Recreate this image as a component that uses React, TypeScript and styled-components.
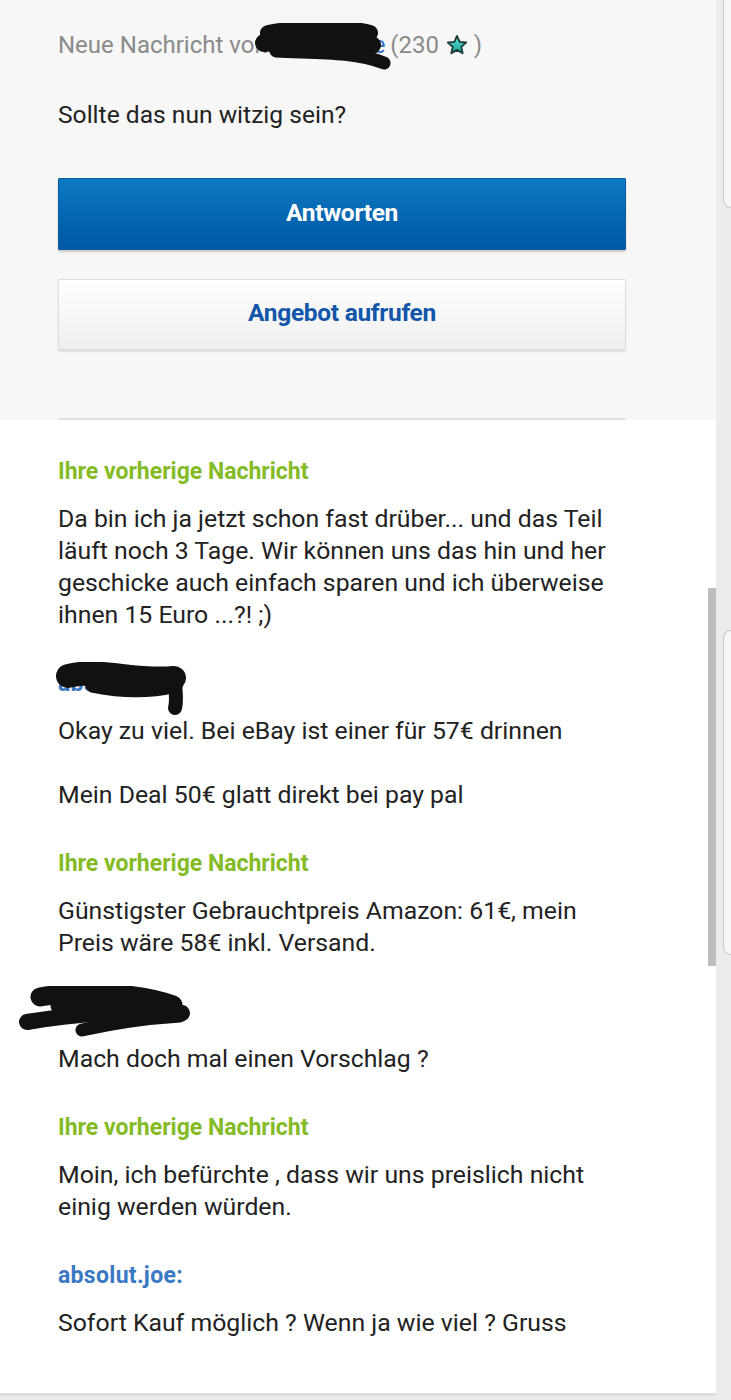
import React from 'react';
import styled, { createGlobalStyle } from 'styled-components';

const GlobalStyle = createGlobalStyle`
  html, body {
    margin: 0;
    padding: 0;
    background: #ececec;
    font-family: Roboto, "Noto Sans", "Liberation Sans", sans-serif;
  }
`

const messages = [
    { own: true, text: 'Da bin ich ja jetzt schon fast drüber... und das Teil läuft noch 3 Tage. Wir können uns das hin und her geschicke auch einfach sparen und ich überweise ihnen 15 Euro ...?! ;)' },
    { own: false, scribble: 1, text: 'Okay zu viel. Bei eBay ist einer für 57€ drinnen\n\nMein Deal 50€ glatt direkt bei pay pal' },
    { own: true, text: 'Günstigster Gebrauchtpreis Amazon: 61€, mein Preis wäre 58€ inkl. Versand.' },
    { own: false, scribble: 2, text: 'Mach doch mal einen Vorschlag ?' },
    { own: true, text: 'Moin, ich befürchte , dass wir uns preislich nicht einig werden würden.' },
    { own: false, text: 'Sofort Kauf möglich ? Wenn ja wie viel ? Gruss' },
]

function Star() {
    return (
        <StarSvg viewBox="0 0 24 24" width="22" height="22">
            <defs>
                <linearGradient id="starFill" x1="0" y1="0" x2="0" y2="1">
                    <stop offset="0" stopColor="#66e3d6" />
                    <stop offset="1" stopColor="#14a59a" />
                </linearGradient>
            </defs>
            <polygon points="12,2 14.9,8.6 22,9.3 16.6,14 18.2,21 12,17.3 5.8,21 7.4,14 2,9.3 9.1,8.6"
                fill="url(#starFill)" stroke="#1d3b3a" strokeWidth="2" strokeLinejoin="round" />
        </StarSvg>
    )
}

function HeaderScribble() {
    return (
        <ScribbleSvg style={{ left: 196, top: -8 }} width="142" height="48" viewBox="0 0 142 48">
            <g stroke="#111" fill="none" strokeLinecap="round">
                <path d="M14 10 C 45 4, 90 3, 116 10" strokeWidth="16" />
                <path d="M10 20 C 45 16, 92 16, 118 22" strokeWidth="18" />
                <path d="M22 28 C 60 30, 100 28, 130 40" strokeWidth="13" />
            </g>
        </ScribbleSvg>
    )
}

function SenderScribble({ kind }: { kind: number }) {
    if (kind === 1) {
        return (
            <ScribbleSvg style={{ left: -4, top: -8 }} width="140" height="58" viewBox="0 0 140 58">
                <g stroke="#111" fill="none" strokeLinecap="round">
                    <path d="M14 14 C 45 6, 80 20, 120 16" strokeWidth="24" />
                    <path d="M40 22 C 70 28, 95 28, 120 22" strokeWidth="18" />
                    <path d="M120 14 C 122 28, 123 38, 121 46" strokeWidth="14" />
                </g>
            </ScribbleSvg>
        )
    }
    return (
        <ScribbleSvg style={{ left: -40, top: -12 }} width="180" height="56" viewBox="0 0 180 56">
            <g stroke="#111" fill="none" strokeLinecap="round">
                <path d="M22 11 C 60 4, 120 6, 155 19" strokeWidth="19" />
                <path d="M40 20 C 80 20, 120 20, 156 24" strokeWidth="15" />
                <path d="M9 36 C 50 29, 120 23, 164 27" strokeWidth="16" />
                <path d="M64 44 C 95 37, 130 32, 162 30" strokeWidth="13" />
            </g>
        </ScribbleSvg>
    )
}

export default function App() {
    return (
        <Page>
            <GlobalStyle />
            <Main>
                <TopPanel>
                    <TopInner>
                        <HeaderLine>
                            Neue Nachricht von: <NameLink>absolut.joe</NameLink> (230 <Star /> )
                            <HeaderScribble />
                        </HeaderLine>
                        <MessageText>Sollte das nun witzig sein?</MessageText>
                        <PrimaryButton>Antworten</PrimaryButton>
                        <SecondaryButton>Angebot aufrufen</SecondaryButton>
                    </TopInner>
                </TopPanel>

                <Thread>
                    {messages.map((m, i) => (
                        <Block key={i}>
                            <Label own={m.own}>
                                {m.own ? 'Ihre vorherige Nachricht' : 'absolut.joe:'}
                                {m.scribble && <SenderScribble kind={m.scribble} />}
                            </Label>
                            <Body>{m.text}</Body>
                        </Block>
                    ))}
                </Thread>

                <ScrollThumb />
            </Main>

            <SideStrip>
                <SideCardTop />
                <SideCard />
            </SideStrip>
        </Page>
    )
}

const Page = styled.div`
    display: flex;
    width: 731px;
    min-height: 1400px;
    background: #ececec;
    overflow: hidden;
`

const Main = styled.div`
    position: relative;
    width: 716px;
    flex-shrink: 0;
`

const TopPanel = styled.div`
    background: #f7f7f7;
    padding: 0 90px 0 58px;
`

const TopInner = styled.div`
    display: flex;
    flex-direction: column;
    padding: 31px 0 68px;
    border-bottom: 2px solid #e2e2e2;
`

const HeaderLine = styled.div`
    position: relative;
    display: flex;
    align-items: center;
    white-space: pre;
    height: 28px;
    font-size: 24px;
    color: #8a8a8a;
`

const NameLink = styled.span`
    color: #2f6fbe;
    letter-spacing: -1.2px;
`

const StarSvg = styled.svg`
    margin: 0 0 0 1px;
`

const ScribbleSvg = styled.svg`
    position: absolute;
    pointer-events: none;
`

const MessageText = styled.div`
    margin-top: 40px;
    font-size: 24.6px;
    line-height: 32px;
    color: #222;
`

const ButtonBase = styled.button`
    display: flex;
    align-items: center;
    justify-content: center;
    width: 100%;
    padding: 0 0 4px;
    font-family: Roboto, "Noto Sans", sans-serif;
    font-weight: 700;
    font-size: 24.5px;
    letter-spacing: -0.3px;
    border-radius: 1px;
    cursor: pointer;
`

const PrimaryButton = styled(ButtonBase)`
    margin-top: 47px;
    height: 72px;
    color: #fff;
    background: linear-gradient(#0b79c1, #0057a3);
    border: 1px solid #0a5c9e;
    box-shadow: 0 2px 2px rgba(0, 0, 0, 0.18);
`

const SecondaryButton = styled(ButtonBase)`
    margin-top: 29px;
    height: 71px;
    color: #1256a9;
    background: linear-gradient(#ffffff, #efefef);
    border: 1px solid #dcdcdc;
    box-shadow: 0 2px 2px rgba(0, 0, 0, 0.1);
`

const Thread = styled.div`
    box-sizing: border-box;
    height: 976px;
    background: #fff;
    padding: 38px 90px 0 58px;
    border-bottom: 3px solid #dedede;
`

const Block = styled.div`
    display: flex;
    flex-direction: column;
    gap: 17px;
    margin-bottom: 39px;
`

const Label = styled.div<{ own: boolean }>`
    position: relative;
    height: 28px;
    line-height: 28px;
    font-size: 23px;
    font-weight: 700;
    letter-spacing: ${p => (p.own ? '0' : '0.3px')};
    color: ${p => (p.own ? '#84bb26' : '#3a78c4')};
`

const Body = styled.div`
    font-size: 24.8px;
    line-height: 32px;
    color: #222;
    white-space: pre-wrap;
`

const ScrollThumb = styled.div`
    position: absolute;
    left: 708px;
    top: 588px;
    width: 8px;
    height: 378px;
    background: #bdbdbd;
`

const SideStrip = styled.div`
    flex: 1;
    display: flex;
    flex-direction: column;
    align-items: stretch;
    padding-left: 7px;
    background: #ececec;
`

const SideCardTop = styled.div`
    height: 207px;
    background: #f6f6f6;
    border-left: 1px solid #c9c9c9;
    border-bottom: 1px solid #c9c9c9;
    border-bottom-left-radius: 10px;
`

const SideCard = styled.div`
    margin-top: 422px;
    height: 323px;
    background: #f6f6f6;
    border: 1px solid #c9c9c9;
    border-right: none;
    border-radius: 10px 0 0 10px;
`
